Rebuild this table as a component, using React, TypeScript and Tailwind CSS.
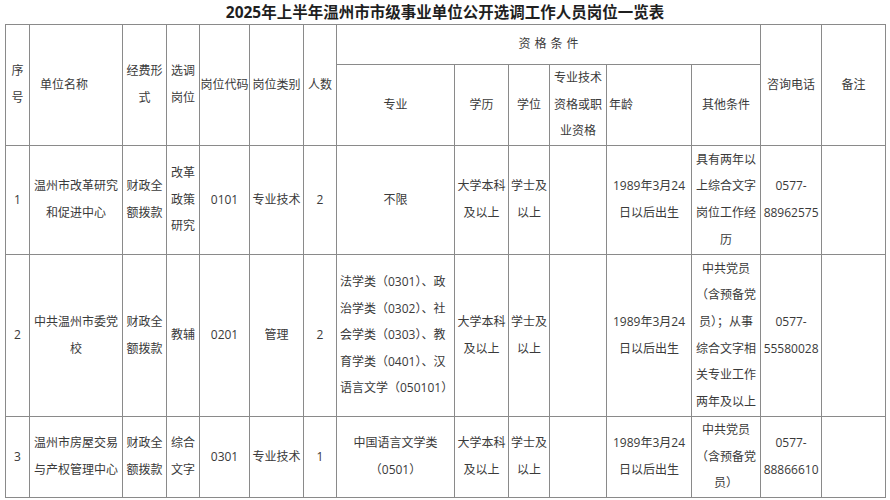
import React from "react";

const cell = "border border-[#8a8a8a] px-[2px] py-0 text-center align-middle";

type Row = {
  no: string;
  unit: string[];
  fund: string[];
  post: string[];
  code: string;
  kind: string;
  count: string;
  major: string[];
  majorLeft?: boolean;
  edu: string[];
  degree: string[];
  age: string[];
  other: string[];
  phone: string[];
  h: string;
};

const rows: Row[] = [
  {
    no: "1",
    unit: ["温州市改革研究", "和促进中心"],
    fund: ["财政全", "额拨款"],
    post: ["改革", "政策", "研究"],
    code: "0101",
    kind: "专业技术",
    count: "2",
    major: ["不限"],
    edu: ["大学本科", "及以上"],
    degree: ["学士及", "以上"],
    age: ["1989年3月24", "日以后出生"],
    other: ["具有两年以", "上综合文字", "岗位工作经", "历"],
    phone: ["0577-", "88962575"],
    h: "h-[109px]",
  },
  {
    no: "2",
    unit: ["中共温州市委党", "校"],
    fund: ["财政全", "额拨款"],
    post: ["教辅"],
    code: "0201",
    kind: "管理",
    count: "2",
    major: [
      "法学类（0301）、政",
      "治学类（0302）、社",
      "会学类（0303）、教",
      "育学类（0401）、汉",
      "语言文学（050101）",
    ],
    majorLeft: true,
    edu: ["大学本科", "及以上"],
    degree: ["学士及", "以上"],
    age: ["1989年3月24", "日以后出生"],
    other: ["中共党员", "（含预备党", "员）；从事", "综合文字相", "关专业工作", "两年及以上"],
    phone: ["0577-", "55580028"],
    h: "h-[162px]",
  },
  {
    no: "3",
    unit: ["温州市房屋交易", "与产权管理中心"],
    fund: ["财政全", "额拨款"],
    post: ["综合", "文字"],
    code: "0301",
    kind: "专业技术",
    count: "1",
    major: ["中国语言文学类", "（0501）"],
    edu: ["大学本科", "及以上"],
    degree: ["学士及", "以上"],
    age: ["1989年3月24", "日以后出生"],
    other: ["中共党员", "（含预备党", "员）"],
    phone: ["0577-", "88866610"],
    h: "h-[80px]",
  },
];

function Lines({ items }: { items: string[] }) {
  return (
    <>
      {items.map((t, i) => (
        <div key={i} className="whitespace-nowrap">
          {t}
        </div>
      ))}
    </>
  );
}

export default function App() {
  return (
    <div
      className="w-[890px] h-[500px] bg-white text-[#3a3a3a] overflow-hidden"
      style={{ fontFamily: '"Open Sans", "Noto Sans CJK SC", sans-serif' }}
    >
      <h1 className="h-6 text-center text-[15.5px] leading-6 font-bold text-[#1f1f1f]">
        2025年上半年温州市市级事业单位公开选调工作人员岗位一览表
      </h1>
      <div className="px-[5px]">
        <table className="w-[880px] table-fixed border-collapse text-[12px] leading-[26.6px]">
          <colgroup>
            <col className="w-[24px]" />
            <col className="w-[93px]" />
            <col className="w-[44px]" />
            <col className="w-[33px]" />
            <col className="w-[50px]" />
            <col className="w-[54px]" />
            <col className="w-[33px]" />
            <col className="w-[118px]" />
            <col className="w-[54px]" />
            <col className="w-[41px]" />
            <col className="w-[57px]" />
            <col className="w-[85px]" />
            <col className="w-[69px]" />
            <col className="w-[61px]" />
            <col className="w-[64px]" />
          </colgroup>
          <thead>
            <tr className="h-[40px]">
              <th rowSpan={2} className={`${cell} font-normal`}>
                <Lines items={["序", "号"]} />
              </th>
              <th rowSpan={2} className={`${cell} font-normal !text-left pl-[10px]`}>
                单位名称
              </th>
              <th rowSpan={2} className={`${cell} font-normal`}>
                <Lines items={["经费形", "式"]} />
              </th>
              <th rowSpan={2} className={`${cell} font-normal`}>
                <Lines items={["选调", "岗位"]} />
              </th>
              <th rowSpan={2} className={`${cell} font-normal !px-0 whitespace-nowrap`}>
                岗位代码
              </th>
              <th rowSpan={2} className={`${cell} font-normal whitespace-nowrap`}>
                岗位类别
              </th>
              <th rowSpan={2} className={`${cell} font-normal`}>
                人数
              </th>
              <th colSpan={6} className={`${cell} font-normal tracking-[4px] pl-[6px]`}>
                资格条件
              </th>
              <th rowSpan={2} className={`${cell} font-normal whitespace-nowrap`}>
                咨询电话
              </th>
              <th rowSpan={2} className={`${cell} font-normal`}>
                备注
              </th>
            </tr>
            <tr className="h-[81px]">
              <th className={`${cell} font-normal`}>专业</th>
              <th className={`${cell} font-normal`}>学历</th>
              <th className={`${cell} font-normal`}>学位</th>
              <th className={`${cell} font-normal`}>
                <Lines items={["专业技术", "资格或职", "业资格"]} />
              </th>
              <th className={`${cell} font-normal !text-left`}>年龄</th>
              <th className={`${cell} font-normal`}>其他条件</th>
            </tr>
          </thead>
          <tbody>
            {rows.map((r) => (
              <tr key={r.no} className={r.h}>
                <td className={cell}>{r.no}</td>
                <td className={cell}>
                  <Lines items={r.unit} />
                </td>
                <td className={cell}>
                  <Lines items={r.fund} />
                </td>
                <td className={cell}>
                  <Lines items={r.post} />
                </td>
                <td className={cell}>{r.code}</td>
                <td className={cell}>{r.kind}</td>
                <td className={cell}>{r.count}</td>
                <td className={r.majorLeft ? `${cell} !text-left pl-[3px]` : cell}>
                  <Lines items={r.major} />
                </td>
                <td className={cell}>
                  <Lines items={r.edu} />
                </td>
                <td className={cell}>
                  <Lines items={r.degree} />
                </td>
                <td className={cell}></td>
                <td className={cell}>
                  <Lines items={r.age} />
                </td>
                <td className={cell}>
                  <Lines items={r.other} />
                </td>
                <td className={cell}>
                  <Lines items={r.phone} />
                </td>
                <td className={cell}></td>
              </tr>
            ))}
          </tbody>
        </table>
      </div>
    </div>
  );
}
